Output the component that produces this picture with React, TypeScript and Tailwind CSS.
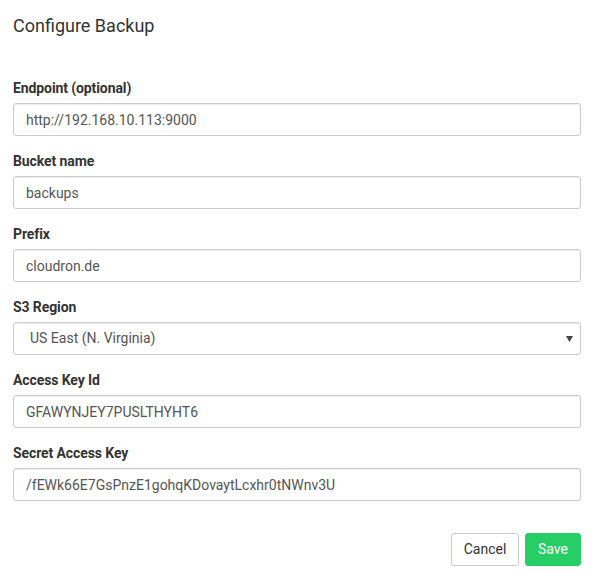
import { useState } from "react";

type Field = {
  id: string;
  label: string;
  value: string;
  select?: boolean;
};

const fields: Field[] = [
  { id: "endpoint", label: "Endpoint (optional)", value: "http://192.168.10.113:9000" },
  { id: "bucket", label: "Bucket name", value: "backups" },
  { id: "prefix", label: "Prefix", value: "cloudron.de" },
  { id: "region", label: "S3 Region", value: "US East (N. Virginia)", select: true },
  { id: "accessKeyId", label: "Access Key Id", value: "GFAWYNJEY7PUSLTHYHT6" },
  { id: "secretAccessKey", label: "Secret Access Key", value: "/fEWk66E7GsPnzE1gohqKDovaytLcxhr0tNWnv3U" },
];

const inputClass =
  "block w-full h-[33px] rounded-[3px] border border-[#cccccc] bg-white px-3 text-[14px] text-[#555555] shadow-[inset_0_1px_1px_rgba(0,0,0,0.075)] outline-none";

export default function App() {
  const [values, setValues] = useState<Record<string, string>>(() =>
    Object.fromEntries(fields.map((f) => [f.id, f.value]))
  );

  return (
    <div
      className="min-h-screen bg-white text-[#333333]"
      style={{ fontFamily: "Roboto, 'Liberation Sans', sans-serif" }}
    >
      <div className="px-[13px] pt-[13px]">
        <h4 className="text-[18px] leading-[26px] font-normal text-[#333333]">Configure Backup</h4>

        <form className="mt-[39px]" onSubmit={(e) => e.preventDefault()}>
          {fields.map((field) => (
            <div key={field.id} className="mb-[15px]">
              <label
                htmlFor={field.id}
                className="mb-[5px] block text-[14px] leading-[20px] font-bold tracking-[-0.1px]"
              >
                {field.label}
              </label>
              {field.select ? (
                <div className="relative">
                  <div id={field.id} className={inputClass + " flex items-center pl-[16px]"}>
                    {values[field.id]}
                  </div>
                  {/* select arrow */}
                  <svg
                    className="pointer-events-none absolute right-[8px] top-[14px]"
                    width="7"
                    height="6"
                    viewBox="0 0 7 6"
                  >
                    <path d="M0 0 L7 0 L3.5 6 Z" fill="#444444" />
                  </svg>
                </div>
              ) : (
                <input
                  id={field.id}
                  type="text"
                  value={values[field.id]}
                  onChange={(e) => setValues({ ...values, [field.id]: e.target.value })}
                  className={inputClass}
                />
              )}
            </div>
          ))}

          <div className="flex justify-end gap-[6px] pt-[17px]">
            <button
              type="button"
              className="h-[33px] w-[68px] rounded-[3px] border border-[#cccccc] bg-white text-[14px] text-[#333333]"
            >
              Cancel
            </button>
            <button
              type="submit"
              className="h-[33px] w-[56px] rounded-[3px] border border-[#27ce65] bg-[#27ce65] text-[14px] text-white"
            >
              Save
            </button>
          </div>
        </form>
      </div>
    </div>
  );
}
